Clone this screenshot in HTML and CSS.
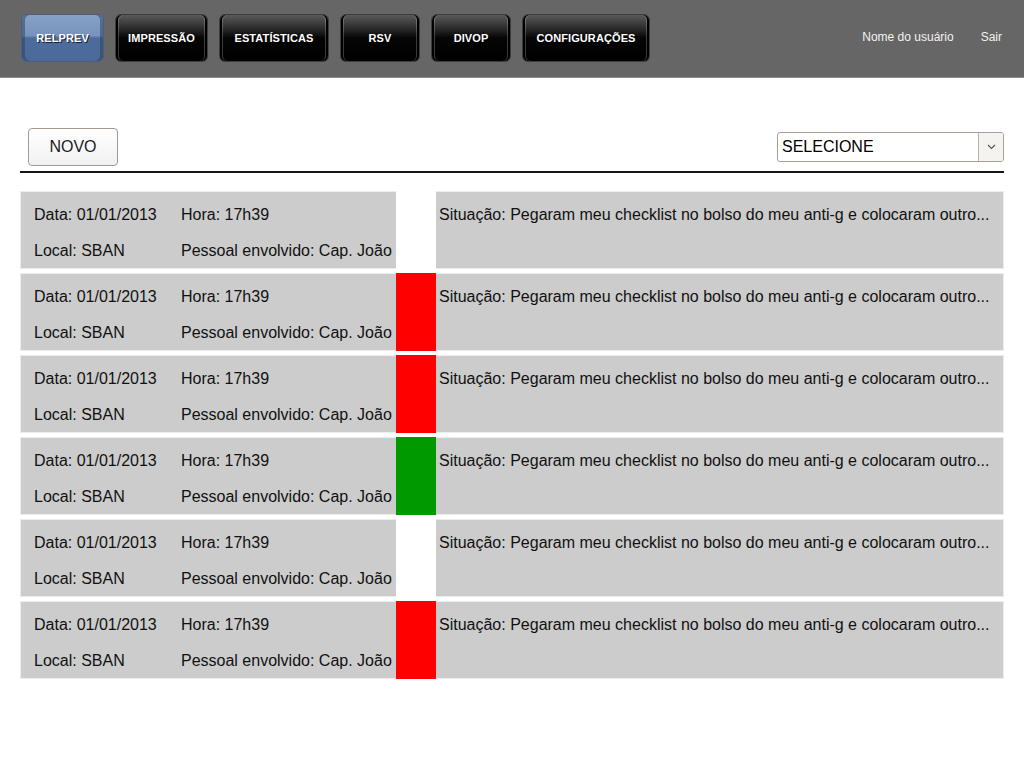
FILE: index.html
```html
<!DOCTYPE html>
<html lang="pt">
<head>
<meta charset="utf-8">
<title>RELPREV</title>
<link rel="stylesheet" href="styles.css">
</head>
<body>
<header class="topbar">
  <nav class="nav">
    <a class="nav-btn active w-relprev">RELPREV</a>
    <a class="nav-btn w-impressao">IMPRESSÃO</a>
    <a class="nav-btn w-estat">ESTATÍSTICAS</a>
    <a class="nav-btn w-rsv">RSV</a>
    <a class="nav-btn w-divop">DIVOP</a>
    <a class="nav-btn w-config">CONFIGURAÇÕES</a>
  </nav>
  <div class="user">
    <span class="user-name">Nome do usuário</span>
    <span class="logout">Sair</span>
  </div>
</header>

<main class="content">
  <div class="toolbar">
    <button class="btn-new">NOVO</button>
    <div class="select">
      <span class="select-text">SELECIONE</span>
      <span class="select-arrow"><svg width="9" height="6" viewBox="0 0 9 6"><path d="M1 1 L4.5 4.5 L8 1" fill="none" stroke="#555" stroke-width="1.1"/></svg></span>
    </div>
  </div>

  <ul class="list">
    <li class="item">
      <div class="info"><span>Data: 01/01/2013</span><span>Hora: 17h39</span><span>Local: SBAN</span><span>Pessoal envolvido: Cap. João</span></div>
      <div class="status white"></div>
      <div class="desc">Situação: Pegaram meu checklist no bolso do meu anti-g e colocaram outro...</div>
    </li>
    <li class="item">
      <div class="info"><span>Data: 01/01/2013</span><span>Hora: 17h39</span><span>Local: SBAN</span><span>Pessoal envolvido: Cap. João</span></div>
      <div class="status red"></div>
      <div class="desc">Situação: Pegaram meu checklist no bolso do meu anti-g e colocaram outro...</div>
    </li>
    <li class="item">
      <div class="info"><span>Data: 01/01/2013</span><span>Hora: 17h39</span><span>Local: SBAN</span><span>Pessoal envolvido: Cap. João</span></div>
      <div class="status red"></div>
      <div class="desc">Situação: Pegaram meu checklist no bolso do meu anti-g e colocaram outro...</div>
    </li>
    <li class="item">
      <div class="info"><span>Data: 01/01/2013</span><span>Hora: 17h39</span><span>Local: SBAN</span><span>Pessoal envolvido: Cap. João</span></div>
      <div class="status green"></div>
      <div class="desc">Situação: Pegaram meu checklist no bolso do meu anti-g e colocaram outro...</div>
    </li>
    <li class="item">
      <div class="info"><span>Data: 01/01/2013</span><span>Hora: 17h39</span><span>Local: SBAN</span><span>Pessoal envolvido: Cap. João</span></div>
      <div class="status white"></div>
      <div class="desc">Situação: Pegaram meu checklist no bolso do meu anti-g e colocaram outro...</div>
    </li>
    <li class="item">
      <div class="info"><span>Data: 01/01/2013</span><span>Hora: 17h39</span><span>Local: SBAN</span><span>Pessoal envolvido: Cap. João</span></div>
      <div class="status red"></div>
      <div class="desc">Situação: Pegaram meu checklist no bolso do meu anti-g e colocaram outro...</div>
    </li>
  </ul>
</main>
</body>
</html>
```

FILE: styles.css
```css
* { box-sizing: border-box; }

html, body {
  margin: 0;
  padding: 0;
  background: #fff;
  font-family: "Liberation Sans", Arial, sans-serif;
  color: #111;
}

.topbar {
  height: 78px;
  background: #666666;
  border-bottom: 1px solid #8c8c8c;
  display: flex;
  align-items: flex-start;
  justify-content: space-between;
}

.nav {
  display: flex;
  gap: 11px;
  padding: 14px 0 0 21px;
}

.nav-btn {
  height: 48px;
  display: flex;
  align-items: center;
  justify-content: center;
  border: 1px solid #3c3c3c;
  border-radius: 6px;
  background: linear-gradient(to bottom, #5a5a5a 0%, #2a2a2a 30%, #050505 50%, #000 100%);
  color: #fff;
  font-size: 11px;
  font-weight: bold;
  letter-spacing: 0.1px;
  text-shadow: 1px 1px 0 #000;
  box-shadow: inset 2px 0 0 #000, inset 3px 0 0 rgba(255,255,255,0.22), inset -2px 0 0 #000, inset -3px 0 0 rgba(255,255,255,0.22);
  padding-bottom: 1px;
}

.nav-btn.active {
  border-color: #4d5e78;
  background: linear-gradient(to bottom, #86a0c6 0%, #7894bc 45%, #4d6c9c 50%, #4a6a9b 100%);
  box-shadow: inset 2px 0 0 rgba(0,0,0,0), inset 3px 0 0 rgba(40,60,90,0.5), inset -2px 0 0 rgba(0,0,0,0), inset -3px 0 0 rgba(40,60,90,0.5);
  text-shadow: 1px 1px 0 #1a2233;
}

.w-relprev { width: 83px; }
.w-impressao { width: 93px; }
.w-estat { width: 110px; }
.w-rsv { width: 80px; }
.w-divop { width: 80px; }
.w-config { width: 128px; }

.user {
  display: flex;
  gap: 27px;
  padding: 30px 22px 0 0;
  font-size: 12px;
  color: #f2f2f2;
}

.content {
  margin: 0 20px;
}

.toolbar {
  display: flex;
  justify-content: space-between;
  align-items: flex-start;
  padding: 50px 0 5px 8px;
  border-bottom: 2px solid #151515;
}

.btn-new {
  width: 90px;
  height: 38px;
  border: 1px solid #a39b92;
  border-radius: 4px;
  background: linear-gradient(to bottom, #ffffff 0%, #f1f1f1 100%);
  font-family: "Liberation Sans", Arial, sans-serif;
  font-size: 16px;
  color: #1a1a24;
  padding: 0;
}

.select {
  margin-top: 4px;
  width: 227px;
  height: 30px;
  border: 1px solid #a8a097;
  border-radius: 3px;
  display: flex;
  background: #fff;
  overflow: hidden;
}

.select-text {
  flex: 1;
  font-size: 16px;
  color: #000;
  padding: 5px 0 0 4px;
}

.select-arrow {
  width: 25px;
  border-left: 1px solid #b9b1a6;
  background: #f4f3ef;
  display: flex;
  align-items: center;
  justify-content: center;
}

.list {
  list-style: none;
  margin: 18px 0 0;
  padding: 0;
  display: flex;
  flex-direction: column;
  gap: 4px;
}

.item {
  display: flex;
  height: 78px;
  border: 1px solid #ececec;
  background: #cccccc;
  font-size: 16px;
  color: #111;
}

.info {
  width: 375px;
  display: grid;
  grid-template-columns: 147px auto;
  grid-template-rows: 18px 18px;
  row-gap: 18px;
  padding: 14px 0 0 13px;
  align-content: start;
  white-space: nowrap;
}

.status {
  width: 40px;
  margin: -1px 0;
}

.status.white { background: #ffffff; }
.status.red { background: #ff0000; }
.status.green { background: #009900; }

.desc {
  flex: 1;
  padding: 14px 0 0 3px;
  white-space: nowrap;
  line-height: 18px;
}
```
